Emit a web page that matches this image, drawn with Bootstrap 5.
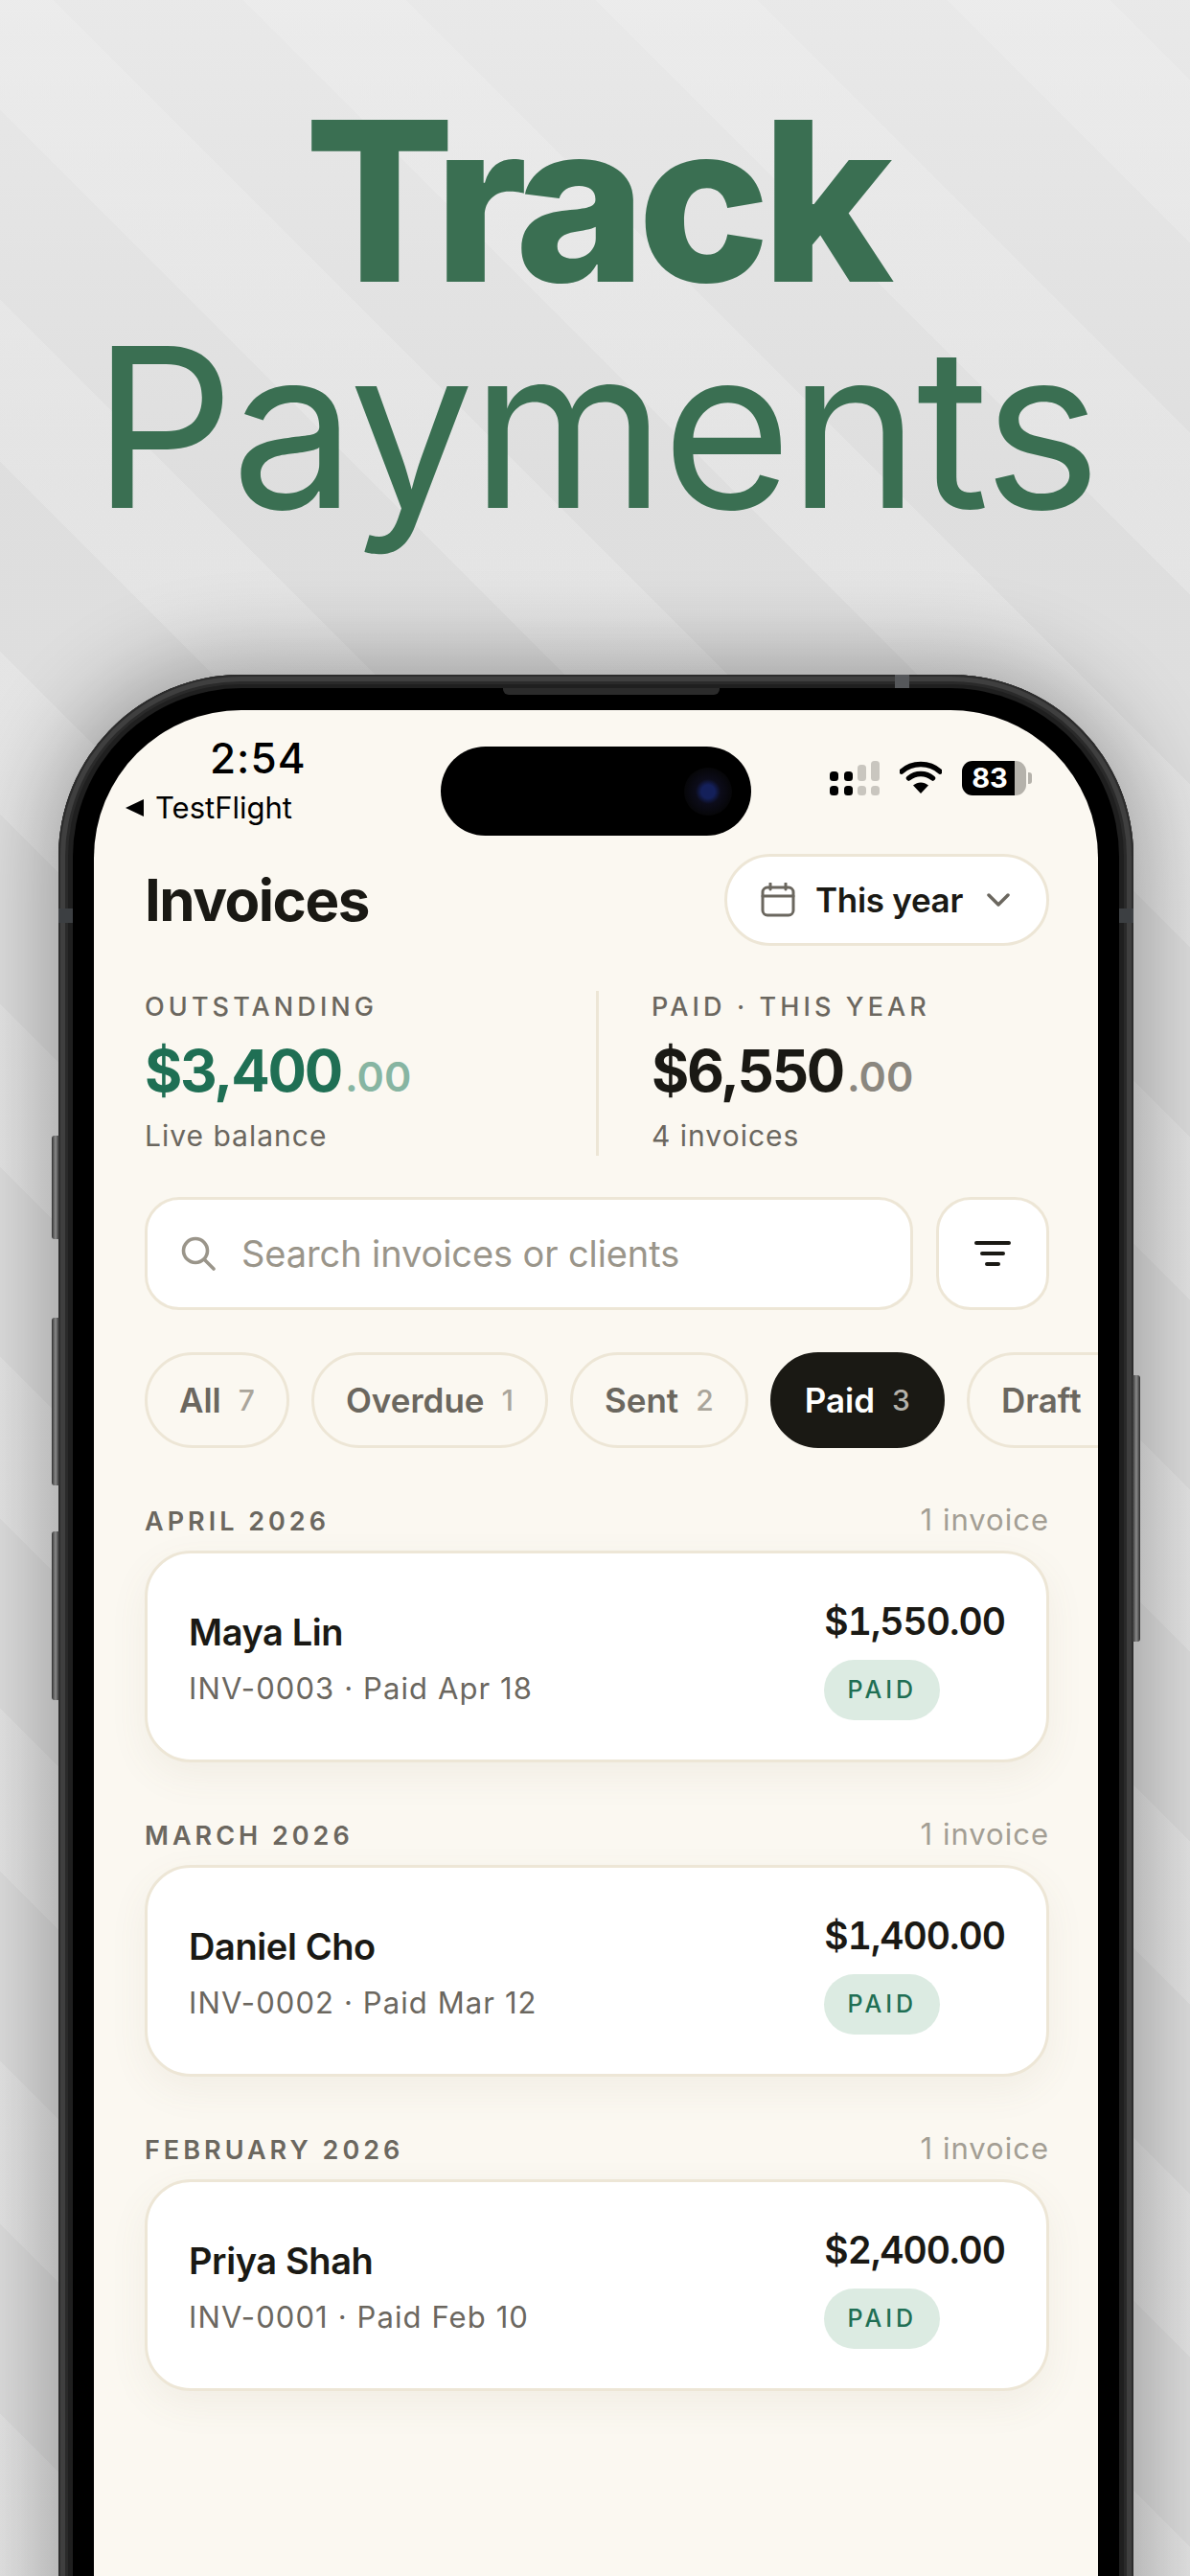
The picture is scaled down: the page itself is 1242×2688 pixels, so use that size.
<!DOCTYPE html>
<html lang="en">
<head>
<meta charset="UTF-8">
<meta name="viewport" content="width=device-width, initial-scale=1.0">
<title>Track Payments</title>
<link rel="stylesheet" href="https://cdn.jsdelivr.net/npm/bootstrap@5.3.0/dist/css/bootstrap.min.css">
<style>
  html, body { width: 1242px; height: 2688px; overflow: hidden; }
  body {
    font-family: Inter, "Liberation Sans", sans-serif;
    color: #1a1914;
    background-color: #dedede;
    background-image:
      linear-gradient(180deg, rgba(240,240,240,.6) 0, rgba(225,225,225,.15) 500px, rgba(200,200,200,0) 800px),
      repeating-linear-gradient(45deg, rgba(255,255,255,.2) 0 120px, rgba(255,255,255,0) 120px 260px);
  }
  .hero-title {
    margin: 0; padding-top: 92px; text-align: center; color: #3a6f52;
    font-size: 232px; line-height: 236px; font-weight: 400; white-space: nowrap;
  }
  .hero-title b { display: block; font-weight: 800; letter-spacing: -8.5px; }
  .hero-title span { display: block; letter-spacing: -3.5px; }

  .phone-frame {
    position: relative; width: 1122px; height: 2100px; margin: 140px 0 0 61px; padding: 14px 15px 0;
    border-radius: 190px 190px 0 0;
    background: #1f1f1f;
    box-shadow: 0 0 90px 14px rgba(0,0,0,.3), inset 0 0 0 2px #2c2c2c, inset 0 0 0 7px #3f3f3f, inset 0 0 0 10px #2a2a2a;
  }
  .phone-bezel {
    position: relative; height: 100%; padding: 23px 22px 0; background: #000;
    border-radius: 176px 176px 0 0;
  }
  .phone-screen {
    position: relative; height: 100%; overflow: hidden;
    background: #fbf8f1; border-radius: 154px 154px 0 0;
  }
  .side-key { position: absolute; width: 8px; background: linear-gradient(90deg, #333, #8a8a8a 50%, #2c2c2c); border-radius: 3px 0 0 3px; }
  .key-a { left: -7px; top: 481px; height: 108px; }
  .key-b { left: -7px; top: 671px; height: 175px; }
  .key-c { left: -7px; top: 894px; height: 176px; }
  .key-d { right: -7px; top: 731px; height: 278px; border-radius: 0 3px 3px 0; }
  .antenna { position: absolute; background: #55575a; }
  .antenna-top { left: 873px; top: 0; width: 15px; height: 14px; }
  .antenna-l { left: 0; top: 244px; width: 15px; height: 15px; background: #3c3f42; }
  .antenna-r { right: 0; top: 244px; width: 15px; height: 15px; background: #3c3f42; }
  .speaker { position: absolute; left: 449px; top: 0; width: 226px; height: 7px; background: #2b2b2b; border-radius: 0 0 6px 6px; }

  .island { position: absolute; left: 362px; top: 38px; width: 324px; height: 93px; border-radius: 47px; background: #000; }
  .island-lens { position: absolute; left: 254px; top: 22px; width: 50px; height: 50px; border-radius: 50%; background: radial-gradient(circle, #14205a 0 7px, #0c0c1a 13px, #060608 25px); }

  .status-row { height: 150px; }
  .status-left { padding: 28px 0 0 33px; }
  .status-time { font-size: 44px; line-height: 44px; font-weight: 500; padding-left: 88px; color: #000; letter-spacing: 1px; }
  .status-app { font-size: 31px; line-height: 34px; color: #000; margin-top: 13px; gap: 12px; }
  .back-tri { width: 0; height: 0; border-style: solid; border-width: 9px 19px 9px 0; border-color: transparent #000 transparent transparent; }
  .status-right { padding: 53px 69px 0 0; gap: 21px; }
  .batt-body {
    width: 67px; height: 36px; border-radius: 11px; text-align: center; color: #fff; font-size: 29px; line-height: 36px; font-weight: 700;
    padding-right: 9px; background: linear-gradient(90deg, #000 82%, #b5b2ab 82%);
  }
  .batt-nub { width: 4px; height: 12px; background: #b5b2ab; border-radius: 0 3px 3px 0; margin-left: 2px; }

  .screen-body { padding: 0 51px 0 53px; }
  .page-title { font-size: 60px; line-height: 70px; font-weight: 700; letter-spacing: -1.5px; margin: 0; }
  .range-btn {
    width: 339px; height: 96px; padding: 0 38px 0 35px; gap: 21px; background: #fff; color: #1a1914; white-space: nowrap;
    border: 3px solid #ede6d6; font-size: 35px; font-weight: 600; letter-spacing: -.3px;
  }
  .range-btn:hover { background: #fff; color: #1a1914; border-color: #ede6d6; }

  .stats-row { margin-top: 47px; height: 172px; }
  .stat-col { width: 471px; }
  .stat-col + .stat-col { border-left: 3px solid #ede6d6; padding-left: 55px; width: 471px; }
  .stat-label { font-size: 27px; line-height: 34px; font-weight: 500; letter-spacing: 4.1px; color: #6b675f; }
  .stat-value { font-size: 60px; line-height: 76px; margin-top: 11px; font-weight: 700; letter-spacing: -2.2px; }
  .stat-value small { font-size: 43px; font-weight: 600; letter-spacing: 0; margin-left: 4px; }
  .stat-green { color: #1f6f54; }
  .stat-green small { color: #87b5a2; }
  .stat-dark small { color: #8b877f; }
  .stat-note { font-size: 30px; line-height: 42px; margin-top: 3px; color: #6b675f; letter-spacing: 1px; }

  .search-row { margin-top: 43px; gap: 24px; }
  .search-box {
    height: 118px; flex: 1; padding: 0 35px; gap: 27px; background: #fff;
    border: 3px solid #ede6d6; border-radius: 36px; color: #9a958a; font-size: 38px; letter-spacing: -.1px;
  }
  .filter-btn { width: 118px; height: 118px; padding: 0; background: #fff; border: 3px solid #ede6d6; border-radius: 36px; }
  .filter-btn:hover { background: #fff; border-color: #ede6d6; }

  .chip-row { margin: 44px -53px 0 0; gap: 23px; overflow: hidden; }
  .chip-btn {
    flex: none; height: 100px; padding: 0 33px; gap: 18px; border: 3px solid #ede6d6;
    background: transparent; color: #6b675f; font-size: 35px; font-weight: 600;
  }
  .chip-btn:hover { background: transparent; color: #6b675f; border-color: #ede6d6; }
  .chip-count { font-size: 30px; font-weight: 500; color: #aaa59b; }
  .chip-on, .chip-on:hover { background: #1a1914; border-color: #1a1914; color: #fff; }
  .chip-on .chip-count { color: #b5b2ab; }

  .month-block { margin-top: 0; height: 328px; }
  .first-block { margin-top: 52px; }
  .month-head { height: 55px; }
  .month-name { font-size: 27px; font-weight: 600; letter-spacing: 4px; color: #6b675f; }
  .month-count { font-size: 31px; color: #a39e94; letter-spacing: 1px; }
  .pay-card {
    height: 221px; border: 3px solid #ede6d6; border-radius: 48px; background: #fff;
    box-shadow: 0 14px 40px rgba(120,105,70,.07);
  }
  .pay-card .card-body { padding: 4px 43px 0; }
  .client-name { font-size: 38px; line-height: 46px; font-weight: 600; letter-spacing: -.4px; }
  .inv-line { font-size: 31px; line-height: 40px; color: #6b675f; margin-top: 16px; letter-spacing: 1.1px; }
  .pay-amount { font-size: 39px; line-height: 46px; font-weight: 600; font-variant-numeric: tabular-nums; letter-spacing: -1px; margin-top: 2px; }
  .paid-tag {
    display: block; width: 121px; height: 63px; margin-top: 17px; padding: 0; line-height: 63px; text-align: center;
    background: #dcebe2; color: #1f6f54; font-size: 25px; font-weight: 500; letter-spacing: 4px;
  }
</style>
</head>
<body>
  <h1 class="hero-title"><b>Track</b><span>Payments</span></h1>

  <div class="phone-frame">
    <i class="side-key key-a"></i>
    <i class="side-key key-b"></i>
    <i class="side-key key-c"></i>
    <i class="side-key key-d"></i>
    <i class="antenna antenna-top"></i>
    <i class="antenna antenna-l"></i>
    <i class="antenna antenna-r"></i>
    <div class="phone-bezel">
      <i class="speaker"></i>
      <div class="phone-screen">
        <div class="island"><div class="island-lens"></div></div>

        <div class="status-row d-flex justify-content-between">
          <div class="status-left">
            <div class="status-time">2:54</div>
            <div class="status-app d-flex align-items-center"><i class="back-tri"></i>TestFlight</div>
          </div>
          <div class="status-right d-flex align-items-start">
            <svg width="52" height="36" viewBox="0 0 52 36">
              <rect x="0" y="11" width="9" height="10" rx="3.5" fill="#000"/>
              <rect x="15" y="11" width="9" height="10" rx="3.5" fill="#000"/>
              <rect x="29" y="4" width="9" height="17" rx="3.5" fill="#c9c6bf"/>
              <rect x="43" y="0" width="9" height="21" rx="3.5" fill="#c9c6bf"/>
              <rect x="0" y="26" width="9" height="10" rx="3.5" fill="#000"/>
              <rect x="15" y="26" width="9" height="10" rx="3.5" fill="#000"/>
              <rect x="29" y="26" width="9" height="10" rx="3.5" fill="#c9c6bf"/>
              <rect x="43" y="26" width="9" height="10" rx="3.5" fill="#c9c6bf"/>
            </svg>
            <svg width="44" height="36" viewBox="0 0 44 36">
              <path d="M2 11 C13 1 31 1 42 11" fill="none" stroke="#000" stroke-width="5.5" stroke-linecap="round"/>
              <path d="M9.5 18 C16.5 12 27.5 12 34.5 18" fill="none" stroke="#000" stroke-width="5.5" stroke-linecap="round"/>
              <path d="M22 34 L14 25.5 C19 21.5 25 21.5 30 25.5 Z" fill="#000"/>
            </svg>
            <div class="d-flex align-items-center">
              <div class="batt-body">83</div>
              <i class="batt-nub"></i>
            </div>
          </div>
        </div>

        <div class="screen-body">
          <div class="d-flex justify-content-between align-items-center">
            <h2 class="page-title">Invoices</h2>
            <button class="btn range-btn rounded-pill d-flex align-items-center" type="button">
              <svg width="36" height="36" viewBox="0 0 36 36" fill="none" stroke="#6b675f" stroke-width="3" stroke-linecap="round" class="flex-shrink-0">
                <rect x="2" y="5" width="32" height="29" rx="5"/>
                <path d="M2 14 H34 M10 1 V7 M26 1 V7"/>
              </svg>
              <span>This year</span>
              <svg width="24" height="14" viewBox="0 0 24 14" fill="none" stroke="#6b675f" stroke-width="3.5" stroke-linecap="round" stroke-linejoin="round" class="ms-auto flex-shrink-0">
                <path d="M2 2 L12 12 L22 2"/>
              </svg>
            </button>
          </div>

          <div class="stats-row d-flex">
            <div class="stat-col">
              <div class="stat-label">OUTSTANDING</div>
              <div class="stat-value stat-green">$3,400<small>.00</small></div>
              <div class="stat-note">Live balance</div>
            </div>
            <div class="stat-col">
              <div class="stat-label">PAID · THIS YEAR</div>
              <div class="stat-value stat-dark">$6,550<small>.00</small></div>
              <div class="stat-note">4 invoices</div>
            </div>
          </div>

          <div class="search-row d-flex">
            <div class="search-box d-flex align-items-center">
              <svg width="36" height="36" viewBox="0 0 36 36" fill="none" stroke="#9a958a" stroke-width="3.6" stroke-linecap="round">
                <circle cx="15" cy="15" r="12.5"/>
                <path d="M24.5 24.5 L34 34"/>
              </svg>
              <span>Search invoices or clients</span>
            </div>
            <button class="btn filter-btn d-flex align-items-center justify-content-center" type="button" aria-label="Filter">
              <svg width="38" height="26" viewBox="0 0 38 26" stroke="#1a1914" stroke-width="4" stroke-linecap="round">
                <path d="M2 2 H36 M8 13 H30 M13 24 H25"/>
              </svg>
            </button>
          </div>

          <div class="chip-row d-flex">
            <button class="btn chip-btn rounded-pill d-flex align-items-center" type="button">All <span class="chip-count">7</span></button>
            <button class="btn chip-btn rounded-pill d-flex align-items-center" type="button">Overdue <span class="chip-count">1</span></button>
            <button class="btn chip-btn rounded-pill d-flex align-items-center" type="button">Sent <span class="chip-count">2</span></button>
            <button class="btn chip-btn chip-on rounded-pill d-flex align-items-center" type="button">Paid <span class="chip-count">3</span></button>
            <button class="btn chip-btn rounded-pill d-flex align-items-center" type="button">Draft <span class="chip-count">1</span></button>
          </div>

          <div class="month-block first-block">
            <div class="month-head d-flex justify-content-between align-items-baseline">
              <span class="month-name">APRIL 2026</span><span class="month-count">1 invoice</span>
            </div>
            <div class="card pay-card">
              <div class="card-body d-flex justify-content-between align-items-center">
                <div>
                  <div class="client-name">Maya Lin</div>
                  <div class="inv-line">INV-0003 · Paid Apr 18</div>
                </div>
                <div>
                  <div class="pay-amount">$1,550.00</div>
                  <span class="badge rounded-pill paid-tag">PAID</span>
                </div>
              </div>
            </div>
          </div>

          <div class="month-block">
            <div class="month-head d-flex justify-content-between align-items-baseline">
              <span class="month-name">MARCH 2026</span><span class="month-count">1 invoice</span>
            </div>
            <div class="card pay-card">
              <div class="card-body d-flex justify-content-between align-items-center">
                <div>
                  <div class="client-name">Daniel Cho</div>
                  <div class="inv-line">INV-0002 · Paid Mar 12</div>
                </div>
                <div>
                  <div class="pay-amount">$1,400.00</div>
                  <span class="badge rounded-pill paid-tag">PAID</span>
                </div>
              </div>
            </div>
          </div>

          <div class="month-block">
            <div class="month-head d-flex justify-content-between align-items-baseline">
              <span class="month-name">FEBRUARY 2026</span><span class="month-count">1 invoice</span>
            </div>
            <div class="card pay-card">
              <div class="card-body d-flex justify-content-between align-items-center">
                <div>
                  <div class="client-name">Priya Shah</div>
                  <div class="inv-line">INV-0001 · Paid Feb 10</div>
                </div>
                <div>
                  <div class="pay-amount">$2,400.00</div>
                  <span class="badge rounded-pill paid-tag">PAID</span>
                </div>
              </div>
            </div>
          </div>
        </div>
      </div>
    </div>
  </div>

  <script src="https://cdn.jsdelivr.net/npm/bootstrap@5.3.0/dist/js/bootstrap.bundle.min.js"></script>
</body>
</html>
